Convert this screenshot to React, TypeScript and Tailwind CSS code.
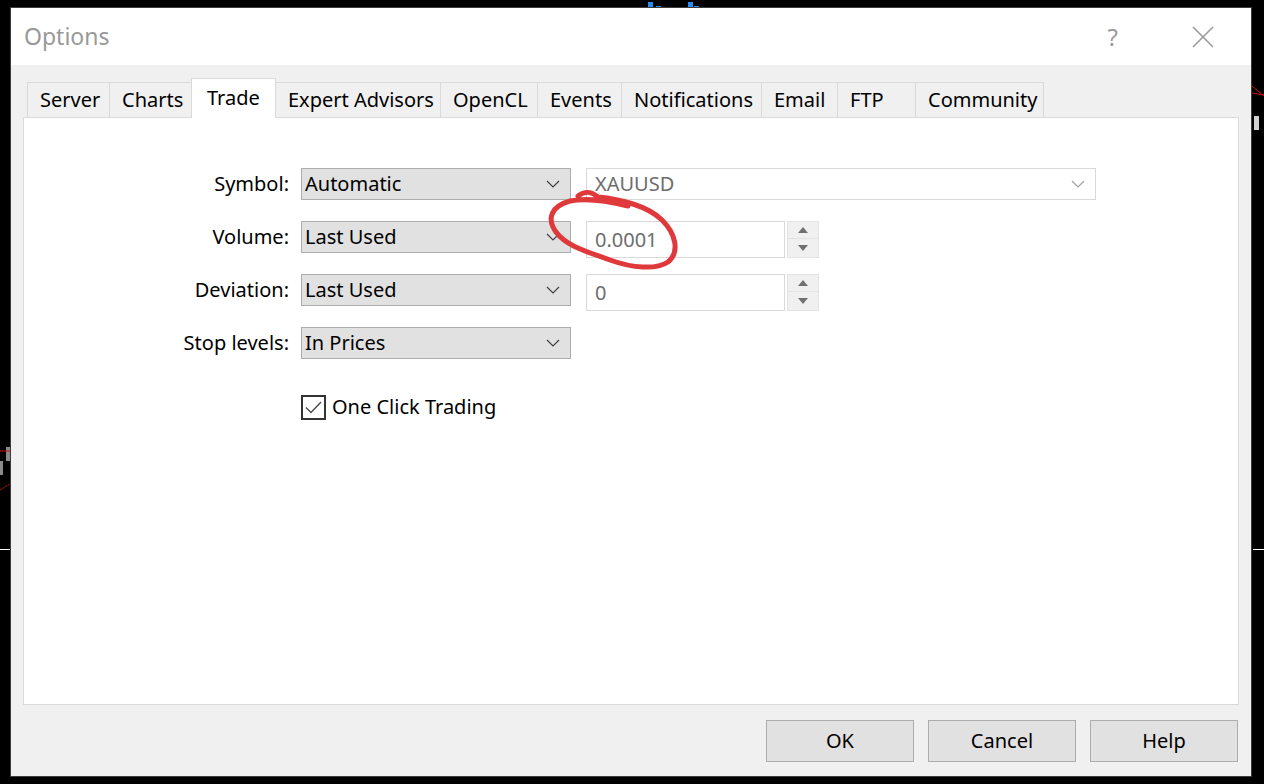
import React from "react";

const FONT = { fontFamily: '"Noto Sans", "Open Sans", Arial, sans-serif' };

const TABS = [
    { label: "Server", w: "w-[83px]" },
    { label: "Charts", w: "w-[83px]" },
    { label: "Trade", w: "w-[85px]", active: true },
    { label: "Expert Advisors", w: "w-[166px]" },
    { label: "OpenCL", w: "w-[98px]" },
    { label: "Events", w: "w-[85px]" },
    { label: "Notifications", w: "w-[141px]" },
    { label: "Email", w: "w-[77px]" },
    { label: "FTP", w: "w-[79px]" },
    { label: "Community", w: "w-[129px]" },
];

// ─── Small pieces ─────────────────────────────────────────────────────────────

const Chevron = ({ color = "#404040" }: { color?: string }) => (
    <svg width="14" height="8" viewBox="0 0 14 8" fill="none">
        <path d="M1 1l6 6 6-6" stroke={color} strokeWidth="1.2" />
    </svg>
);

const Select = ({ value }: { value: string }) => (
    <div className="flex h-[32px] w-[270px] items-center justify-between border border-[#adadad] bg-[#e1e1e1] pl-[3px] pr-[10px] text-[20px] text-black">
        <span>{value}</span>
        <Chevron />
    </div>
);

const Spinner = () => (
    <div className="ml-[2px] flex h-[37px] w-[32px] flex-col">
        <div className="flex h-[18px] items-center justify-center border border-[#e3e3e3] bg-[#f0f0f0]">
            <svg width="10" height="6" viewBox="0 0 10 6">
                <path d="M5 0l5 6H0z" fill="#707070" />
            </svg>
        </div>
        <div className="flex h-[19px] items-center justify-center border border-t-0 border-[#e3e3e3] bg-[#f0f0f0]">
            <svg width="10" height="6" viewBox="0 0 10 6">
                <path d="M0 0h10L5 6z" fill="#707070" />
            </svg>
        </div>
    </div>
);

const NumberInput = ({ value }: { value: string }) => (
    <div className="flex items-start">
        <div className="flex h-[37px] w-[199px] items-center border border-[#d9d9d9] bg-white pl-[8px] text-[20px] text-[#6d6d6d]">
            {value}
        </div>
        <Spinner />
    </div>
);

const FormRow = ({ label, children }: { label: string; children: React.ReactNode }) => (
    <div className="flex h-[53px] items-start">
        <div className="flex h-[32px] w-[265px] items-center justify-end text-[20px] text-black">{label}</div>
        <div className="ml-[12px] flex items-start gap-[15px]">{children}</div>
    </div>
);

const DialogButton = ({ label }: { label: string }) => (
    <div className="flex h-[42px] w-[148px] items-center justify-center border border-[#adadad] bg-[#e1e1e1] text-[20px] text-black">
        {label}
    </div>
);

// ─── Component ────────────────────────────────────────────────────────────────

export default function App() {
    return (
        <div className="relative h-[784px] w-[1264px] overflow-hidden bg-black" style={FONT}>
            {/* chart leftovers behind the dialog */}
            <span className="absolute left-[648px] top-[2px] h-[6px] w-[5px] bg-[#2a8cf0]" />
            <span className="absolute left-[656px] top-[6px] h-[3px] w-[5px] bg-[#2a8cf0]" />
            <span className="absolute left-[688px] top-[2px] h-[6px] w-[5px] bg-[#2a8cf0]" />
            <span className="absolute left-[694px] top-[6px] h-[3px] w-[5px] bg-[#2a8cf0]" />
            <span className="absolute left-[1254px] top-[116px] h-[14px] w-[5px] bg-[#d0d0d0]" />
            <span className="absolute left-[1253px] top-[549px] h-[1px] w-[11px] bg-white" />
            <span className="absolute left-0 top-[549px] h-[1px] w-[10px] bg-white" />
            <span className="absolute left-0 top-[461px] h-[14px] w-[3px] bg-[#8a8a8a]" />
            <span className="absolute left-[6px] top-[447px] h-[14px] w-[4px] bg-[#8a8a8a]" />
            <svg className="pointer-events-none absolute left-0 top-0" width="1264" height="784">
                <path d="M1252 86 L1264 96" stroke="#d01010" strokeWidth="1" />
                <path d="M1252 93 L1264 95" stroke="#d01010" strokeWidth="1" />
                <path d="M0 490 L10 484" stroke="#d01010" strokeWidth="1" strokeDasharray="2 1" />
                <path d="M0 451 L10 451" stroke="#d01010" strokeWidth="1" />
            </svg>

            {/* dialog */}
            <div className="absolute left-[10px] top-[7px] flex h-[770px] w-[1242px] flex-col border border-[#3c3c3c] bg-[#f0f0f0]">
                <div className="flex h-[57px] items-center bg-white">
                    <span className="pl-[13px] text-[23px] text-[#999999]">Options</span>
                    <span className="ml-auto mr-[74px] text-[24px] text-[#9a9a9a]">?</span>
                    <svg className="mr-[37px]" width="22" height="22" viewBox="0 0 22 22">
                        <path d="M1 1l20 20M21 1L1 21" stroke="#9a9a9a" strokeWidth="1.6" />
                    </svg>
                </div>

                <div className="flex flex-1 flex-col px-[12px] pt-[13px]">
                    {/* tabs */}
                    <div className="flex h-[39px] items-end pl-[4px]">
                        {TABS.map((t) =>
                            t.active ? (
                                <div
                                    key={t.label}
                                    className={`${t.w} relative z-10 -mb-px -ml-px flex h-[40px] items-center border border-b-0 border-[#d9d9d9] bg-white pb-[2px] pl-[15px] text-[20px] text-black`}
                                >
                                    {t.label}
                                </div>
                            ) : (
                                <div
                                    key={t.label}
                                    className={`${t.w} -ml-px flex h-[35px] items-center border border-b-0 border-[#d9d9d9] bg-[#f0f0f0] pl-[12px] text-[20px] text-black first:ml-0`}
                                >
                                    {t.label}
                                </div>
                            ),
                        )}
                    </div>

                    {/* panel */}
                    <div className="flex h-[588px] flex-col border border-[#d9d9d9] bg-white pt-[50px]">
                        <FormRow label="Symbol:">
                            <Select value="Automatic" />
                            <div className="flex h-[32px] w-[510px] items-center justify-between border border-[#d9d9d9] bg-white pl-[8px] pr-[10px] text-[20px] text-[#6d6d6d]">
                                <span>XAUUSD</span>
                                <Chevron color="#a0a0a0" />
                            </div>
                        </FormRow>
                        <FormRow label="Volume:">
                            <Select value="Last Used" />
                            <NumberInput value="0.0001" />
                        </FormRow>
                        <FormRow label="Deviation:">
                            <Select value="Last Used" />
                            <NumberInput value="0" />
                        </FormRow>
                        <FormRow label="Stop levels:">
                            <Select value="In Prices" />
                        </FormRow>

                        <div className="ml-[277px] mt-[12px] flex items-center gap-[6px]">
                            <div className="flex h-[25px] w-[25px] items-center justify-center border-2 border-[#333333] bg-white">
                                <svg width="17" height="13" viewBox="0 0 17 13" fill="none">
                                    <path d="M1 6.5l5 5L16 1" stroke="#4a4a4a" strokeWidth="1.4" />
                                </svg>
                            </div>
                            <span className="text-[20px] text-black">One Click Trading</span>
                        </div>
                    </div>

                    {/* buttons */}
                    <div className="mt-[15px] flex justify-end gap-[14px] pr-[1px]">
                        <DialogButton label="OK" />
                        <DialogButton label="Cancel" />
                        <DialogButton label="Help" />
                    </div>
                </div>
            </div>

            {/* red hand-drawn annotation */}
            <svg className="pointer-events-none absolute left-0 top-0" width="1264" height="784">
                <path
                    d="M578 196 C586 190 592 192 598 197 C620 199 648 206 662 220 C676 234 680 252 668 262 C656 270 632 268 610 260 C588 252 566 246 556 232 C546 218 552 206 570 201 C590 197 612 202 628 206"
                    stroke="#e0393c"
                    strokeWidth="5"
                    strokeLinecap="round"
                    fill="none"
                />
            </svg>
        </div>
    );
}
